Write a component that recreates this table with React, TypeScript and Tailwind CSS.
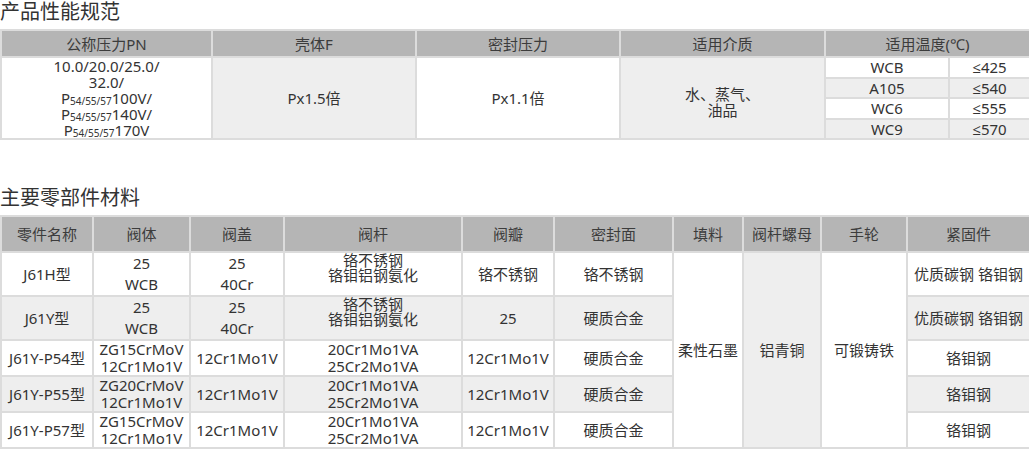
import React from "react";

const C = "border-2 border-[#dcdcdc] p-0 text-center align-middle font-normal";
const G = "bg-[#eeeeee]";

function P({ v }: { v: string }) {
  return (
    <>
      P<sub className="text-[10px] bottom-[-0.1em]">54/55/57</sub>
      {v}
    </>
  );
}

function Le({ v }: { v: string }) {
  return (
    <>
      <span style={{ fontFamily: '"Open Sans", "DejaVu Sans", sans-serif' }}>≤</span>
      {v}
    </>
  );
}

export default function App() {
  const rows = [
    { name: "J61H型", body: ["25", "WCB"], cover: ["25", "40Cr"], stem: ["铬不锈钢", "铬钼铝钢氨化"], disc: "铬不锈钢", seal: "铬不锈钢", fast: "优质碳钢 铬钼钢", gray: false },
    { name: "J61Y型", body: ["25", "WCB"], cover: ["25", "40Cr"], stem: ["铬不锈钢", "铬钼铝钢氨化"], disc: "25", seal: "硬质合金", fast: "优质碳钢 铬钼钢", gray: true },
    { name: "J61Y-P54型", body: ["ZG15CrMoV", "12Cr1Mo1V"], cover: ["12Cr1Mo1V"], stem: ["20Cr1Mo1VA", "25Cr2Mo1VA"], disc: "12Cr1Mo1V", seal: "硬质合金", fast: "铬钼钢", gray: false },
    { name: "J61Y-P55型", body: ["ZG20CrMoV", "12Cr1Mo1V"], cover: ["12Cr1Mo1V"], stem: ["20Cr1Mo1VA", "25Cr2Mo1VA"], disc: "12Cr1Mo1V", seal: "硬质合金", fast: "铬钼钢", gray: true },
    { name: "J61Y-P57型", body: ["ZG15CrMoV", "12Cr1Mo1V"], cover: ["12Cr1Mo1V"], stem: ["20Cr1Mo1VA", "25Cr2Mo1VA"], disc: "12Cr1Mo1V", seal: "硬质合金", fast: "铬钼钢", gray: false },
  ];

  return (
    <div
      className="w-[1029px] bg-white text-[#333333] text-[15px]"
      style={{ fontFamily: '"Noto Sans", "Noto Sans CJK SC", sans-serif' }}
    >
      <h2 className="text-[20px] leading-[24px] font-normal text-[#333333]">产品性能规范</h2>
      <table className="mt-[5px] w-[1029px] table-fixed border-collapse">
        <colgroup>
          <col className="w-[211px]" />
          <col className="w-[204px]" />
          <col className="w-[204px]" />
          <col className="w-[205px]" />
          <col className="w-[124px]" />
          <col className="w-[81px]" />
        </colgroup>
        <thead>
          <tr className="bg-[#b5b5b5] text-[#3c3c3c] h-[27px] leading-[20px]">
            <th className={C}>公称压力PN</th>
            <th className={C}>壳体F</th>
            <th className={C}>密封压力</th>
            <th className={C}>适用介质</th>
            <th className={C} colSpan={2}>适用温度(℃)</th>
          </tr>
        </thead>
        <tbody className="leading-[16px]">
          <tr className="h-[19px]">
            <td className={C} rowSpan={4}>
              <div className="leading-[16px]">
                10.0/20.0/25.0/
                <br />
                32.0/
                <br />
                <P v="100V/" />
                <br />
                <P v="140V/" />
                <br />
                <P v="170V" />
              </div>
            </td>
            <td className={`${C} ${G}`} rowSpan={4}>Px1.5倍</td>
            <td className={C} rowSpan={4}>Px1.1倍</td>
            <td className={`${C} ${G}`} rowSpan={4}>
              <div className="leading-[16px] pt-[7px]">
                水、蒸气、
                <br />
                油品
              </div>
            </td>
            <td className={C}>WCB</td>
            <td className={C}><Le v="425" /></td>
          </tr>
          <tr className="h-[19px]">
            <td className={`${C} ${G}`}>A105</td>
            <td className={`${C} ${G}`}><Le v="540" /></td>
          </tr>
          <tr className="h-[19px]">
            <td className={C}>WC6</td>
            <td className={C}><Le v="555" /></td>
          </tr>
          <tr className="h-[19px]">
            <td className={`${C} ${G}`}>WC9</td>
            <td className={`${C} ${G}`}><Le v="570" /></td>
          </tr>
        </tbody>
      </table>

      <h2 className="mt-[46px] text-[20px] leading-[24px] font-normal text-[#333333]">主要零部件材料</h2>
      <table className="mt-[5px] w-[1029px] table-fixed border-collapse">
        <colgroup>
          <col className="w-[92px]" />
          <col className="w-[97px]" />
          <col className="w-[94px]" />
          <col className="w-[178px]" />
          <col className="w-[92px]" />
          <col className="w-[119px]" />
          <col className="w-[70px]" />
          <col className="w-[78px]" />
          <col className="w-[86px]" />
          <col className="w-[123px]" />
        </colgroup>
        <thead>
          <tr className="bg-[#b5b5b5] text-[#3c3c3c] h-[36px] leading-[20px]">
            <th className={C}>零件名称</th>
            <th className={C}>阀体</th>
            <th className={C}>阀盖</th>
            <th className={C}>阀杆</th>
            <th className={C}>阀瓣</th>
            <th className={C}>密封面</th>
            <th className={C}>填料</th>
            <th className={C}>阀杆螺母</th>
            <th className={C}>手轮</th>
            <th className={C}>紧固件</th>
          </tr>
        </thead>
        <tbody className="leading-[20px]">
          {rows.map((r, i) => {
            const bg = r.gray ? G : "bg-white";
            const first = i < 2;
            return (
              <tr key={r.name} className={bg}>
                <td className={C}>{r.name}</td>
                <td className={C}>
                  <div className={first ? "leading-[21px]" : "leading-[17px]"}>
                    {r.body.map((t, k) => (
                      <div key={k}>{t}</div>
                    ))}
                  </div>
                </td>
                <td className={C}>
                  <div className={first ? "leading-[21px]" : "leading-[17px]"}>
                    {r.cover.map((t, k) => (
                      <div key={k}>{t}</div>
                    ))}
                  </div>
                </td>
                <td className={C}>
                  <div className={first ? "leading-[15px] pb-[12px]" : "leading-[17px]"}>
                    {r.stem.map((t, k) => (
                      <div key={k}>{t}</div>
                    ))}
                  </div>
                </td>
                <td className={C}>{r.disc}</td>
                <td className={C}>{r.seal}</td>
                {i === 0 && (
                  <>
                    <td className={`${C} bg-white`} rowSpan={5}>柔性石墨</td>
                    <td className={`${C} ${G}`} rowSpan={5}>铝青铜</td>
                    <td className={`${C} bg-white`} rowSpan={5}>可锻铸铁</td>
                  </>
                )}
                <td className={C}>{r.fast}</td>
              </tr>
            );
          })}
        </tbody>
      </table>
    </div>
  );
}
